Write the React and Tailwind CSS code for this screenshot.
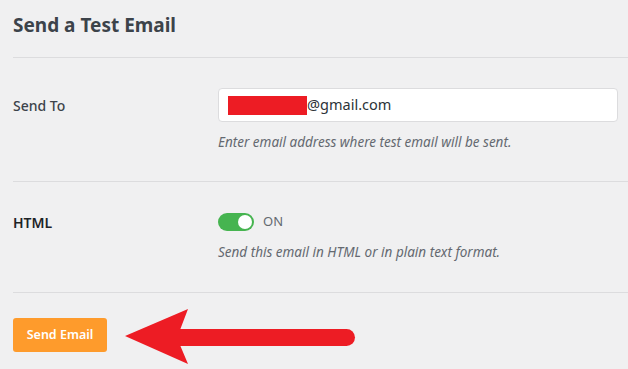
import React from 'react';

const font = { fontFamily: '"Noto Sans", "Open Sans", sans-serif' };

function Arrow() {
  return (
    <svg
      className="absolute left-[120px] top-[305px]"
      width="245"
      height="64"
      viewBox="120 305 245 64"
    >
      <rect x="170" y="329" width="185" height="17" rx="8.5" fill="#ed1c24" />
      <polygon points="125,336 188,309 180,330 180,345 188,364" fill="#ed1c24" />
    </svg>
  );
}

export default function App() {
  return (
    <div
      className="relative w-[628px] h-[369px] overflow-hidden bg-[#f0f0f1] pl-[13px] text-[#1d2327]"
      style={font}
    >
      <div className="h-[57px] pt-[12px]">
        <h2 className="text-[19px] leading-[26px] font-bold text-[#3c434a]">Send a Test Email</h2>
      </div>

      <div className="border-t border-[#dcdcde] flex pt-[30px] pb-[29px]">
        <div className="w-[205px] h-[34px] flex items-center text-[14px] font-medium text-[#3c434a]">
          Send To
        </div>
        <div>
          <div className="w-[400px] h-[34px] bg-white border border-[#dcdcde] rounded-[4px] flex items-center pl-[9px]">
            <span className="w-[79px] h-[19px] bg-[#ed1c24]" />
            <span className="text-[14.5px] text-[#2c3338]">@gmail.com</span>
          </div>
          <p className="mt-[10px] text-[13.5px] leading-[20px] italic text-[#646970]">
            Enter email address where test email will be sent.
          </p>
        </div>
      </div>

      <div className="border-t border-[#dcdcde] flex pt-[31px] pb-[30px]">
        <div className="w-[205px] h-[18px] flex items-center text-[14px] font-semibold text-[#1d2327]">
          HTML
        </div>
        <div>
          <div className="h-[18px] flex items-center gap-[9px]">
            <span className="w-[36px] h-[18px] rounded-full bg-[#46b450] flex items-center justify-end pr-[2px]">
              <span className="w-[14px] h-[14px] rounded-full bg-white" />
            </span>
            <span className="text-[13px] text-[#646970]">ON</span>
          </div>
          <p className="mt-[11px] text-[13.5px] leading-[20px] italic text-[#646970]">
            Send this email in HTML or in plain text format.
          </p>
        </div>
      </div>

      <div className="border-t border-[#dcdcde] pt-[25px]">
        <button className="w-[94px] h-[34px] rounded-[3px] bg-[#fe9b2c] text-white text-[12.5px] font-semibold">
          Send Email
        </button>
      </div>

      <Arrow />
    </div>
  );
}
